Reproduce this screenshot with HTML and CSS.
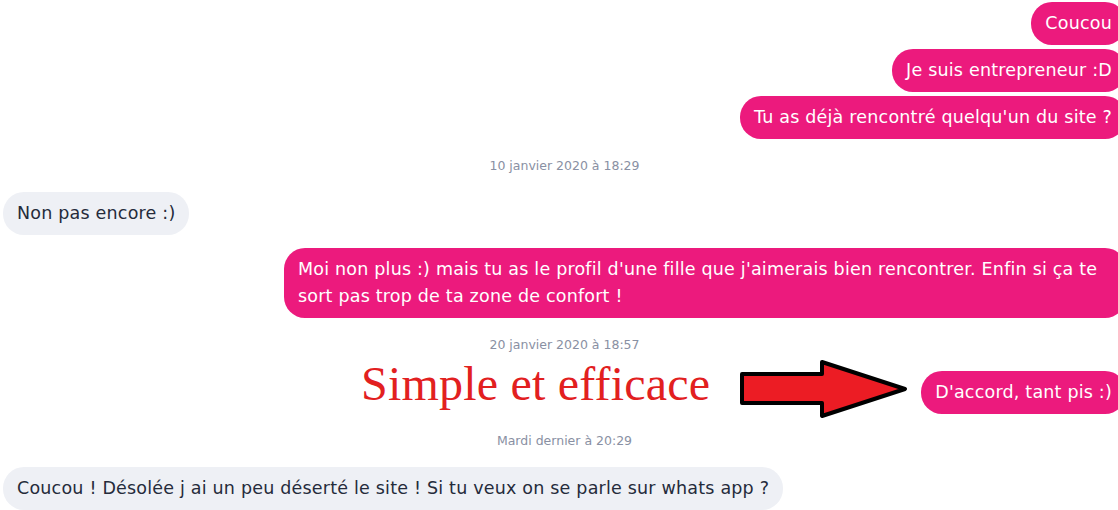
FILE: index.html
```html
<!DOCTYPE html>
<html lang="fr">
<head>
<meta charset="utf-8">
<title>Chat</title>
<link rel="stylesheet" href="styles.css">
</head>
<body>
<div class="chat">
  <div class="msg out first">Coucou</div>
  <div class="msg out">Je suis entrepreneur :D</div>
  <div class="msg out">Tu as déjà rencontré quelqu'un du site ?</div>
  <div class="stamp">10 janvier 2020 à 18:29</div>
  <div class="msg in">Non pas encore :)</div>
  <div class="msg out switch wide">Moi non plus :) mais tu as le profil d'une fille que j'aimerais bien rencontrer. Enfin si ça te sort pas trop de ta zone de confort !</div>
  <div class="stamp">20 janvier 2020 à 18:57</div>
  <div class="msg out annotated">D'accord, tant pis :)
    <div class="note">
      <span class="note-text">Simple et efficace</span>
      <svg class="arrow" width="172" height="62" viewBox="0 0 172 62">
        <polygon points="4,16 84,16 84,4 167,31 84,58 84,45 4,45" fill="#ec1c24" stroke="#000" stroke-width="4" stroke-linejoin="round"/>
      </svg>
    </div>
  </div>
  <div class="stamp">Mardi dernier à 20:29</div>
  <div class="msg in">Coucou ! Désolée j ai un peu déserté le site ! Si tu veux on se parle sur whats app ?</div>
</div>
</body>
</html>
```

FILE: styles.css
```css
html, body {
  margin: 0;
  padding: 0;
  background: #ffffff;
}
body {
  font-family: "DejaVu Sans", "Noto Sans", sans-serif;
  overflow: hidden;
}
.chat {
  display: flex;
  flex-direction: column;
  padding: 2px 0 0 3px;
  margin-right: -8px;
}
.msg {
  font-size: 17.5px;
  letter-spacing: 0.2px;
  line-height: 27px;
  padding: 8px 14px;
  border-radius: 21px;
  margin-top: 4px;
  max-width: 842px;
  box-sizing: border-box;
}
.msg.first { margin-top: 0; }
.msg.switch { margin-top: 13px; }
.msg.out {
  align-self: flex-end;
  background: #ec1a7d;
  color: #ffffff;
}
.msg.in {
  align-self: flex-start;
  background: #eef0f5;
  color: #252b3b;
}
.stamp {
  text-align: center;
  font-size: 12.5px;
  line-height: 18px;
  color: #8990a3;
  margin: 18px 0 17px;
}
.stamp + .msg { margin-top: 0; }
.annotated { position: relative; }
.note {
  position: absolute;
  right: 100%;
  top: -13px;
  margin-right: 11px;
  display: flex;
  align-items: flex-start;
  gap: 28px;
  pointer-events: none;
}
.note-text {
  font-family: "Liberation Serif", "Times New Roman", serif;
  font-size: 48px;
  line-height: 52px;
  letter-spacing: 0.2px;
  color: #e2201f;
  white-space: nowrap;
}
.arrow {
  display: block;
  flex: none;
}
```
